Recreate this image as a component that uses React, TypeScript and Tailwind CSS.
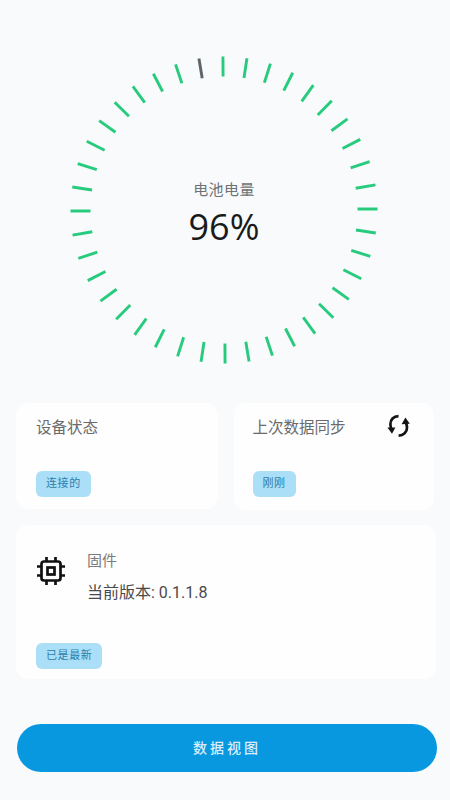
const CJK = "font-['Roboto','Noto_Sans_CJK_SC',sans-serif]";

function Gauge() {
  const ticks = Array.from({ length: 40 }, (_, i) => i);
  return (
    <svg width="320" height="320" viewBox="-160 -160 320 320" className="absolute left-0 top-0">
      {ticks.map((i) => (
        <line
          key={i}
          x1="0"
          y1="-153.5"
          x2="0"
          y2="-133.5"
          stroke={i === 39 ? "#5f6468" : "#28cb7d"}
          strokeWidth="2.9"
          transform={`rotate(${i * 9 - 0.4})`}
        />
      ))}
    </svg>
  );
}

function SyncIcon() {
  return (
    <svg width="26" height="26" viewBox="0 0 26 26" fill="none" stroke="#141414" strokeWidth="2.7">
      <path d="M12.5 3.2C7.5 3.2 4.4 6.8 4.4 11c0 2.2.4 3.8 1.2 5.4" />
      <path d="M1.4 14.6l4.6 6.2 3.4-6.4" fill="#141414" stroke="none" />
      <path d="M12.6 22.6c5 0 8.4-3.4 8.4-7.8 0-2.2-.4-3.6-1.2-5.4" />
      <path d="M15.6 11.2l3.8-6.6 4.4 6.2" fill="#141414" stroke="none" />
    </svg>
  );
}

function ChipIcon() {
  return (
    <svg width="32" height="32" viewBox="0 0 32 32" fill="none" stroke="#111" strokeWidth="2.7">
      <rect x="6.5" y="6.5" width="19" height="19" rx="2.5" />
      <rect x="12.5" y="12.5" width="7" height="7" />
      <path d="M11.5 2v4M20.5 2v4M11.5 26v4M20.5 26v4M2 11.5h4M2 20.5h4M26 11.5h4M26 20.5h4" />
    </svg>
  );
}

function Badge({ children }: { children: React.ReactNode }) {
  return (
    <span className="inline-flex h-[26px] items-center rounded-[6px] bg-[#aadff7] px-[10px] text-[11px] tracking-[0.6px] text-[#2c7dab]">
      {children}
    </span>
  );
}

export default function App() {
  return (
    <div className={`flex h-[800px] w-[450px] flex-col overflow-hidden bg-[#f8fafc] px-4 ${CJK}`}>
      <div className="relative mx-auto mt-[50px] flex h-[320px] w-[320px] translate-x-[-1px] flex-col items-center justify-center pt-[9px]">
        <Gauge />
        <span className="text-[15px] leading-5 tracking-[0.4px] text-[#6f7376]">电池电量</span>
        <span className="mt-[4px] font-['Open_Sans',sans-serif] text-[36px] leading-[46px] text-[#1a1a1a]">96%</span>
      </div>

      <div className="mt-[33px] flex gap-4">
        <div className="flex h-[106px] w-[202px] flex-col items-start justify-between rounded-xl bg-[#fefefe] px-5 pb-3 pt-[13px]">
          <span className="mt-[1px] text-[15.5px] leading-[22px] text-[#6b6b6b]">设备状态</span>
          <Badge>连接的</Badge>
        </div>
        <div className="flex h-[107px] w-[201px] flex-col items-start justify-between rounded-xl bg-[#fefefe] pb-[13px] pl-[19px] pr-[22px] pt-[10px]">
          <div className="flex w-full items-center justify-between">
            <span className="mt-[4px] text-[15.5px] leading-[22px] text-[#6b6b6b]">上次数据同步</span>
            <SyncIcon />
          </div>
          <Badge>刚刚</Badge>
        </div>
      </div>

      <div className="mt-[15px] flex h-[154px] w-[420px] flex-col items-start justify-between rounded-xl bg-[#fefefe] pb-[10px] pl-5 pt-[26px]">
        <div className="flex items-start gap-[19px]">
          <div className="mt-[4px] translate-x-[-1px]">
            <ChipIcon />
          </div>
          <div className="flex flex-col gap-[12px]">
            <span className="text-[15px] leading-[20px] text-[#7b7b7b]">固件</span>
            <span className="text-[16px] leading-[20px] text-[#4a4a4a]">当前版本: 0.1.1.8</span>
          </div>
        </div>
        <Badge>已是最新</Badge>
      </div>

      <button className="ml-[1px] mt-[45px] flex h-[48px] w-[420px] items-center justify-center rounded-[24px] bg-[#0898e0] text-[14px] font-medium tracking-[3px] text-[#d9eefa]">
        数据视图
      </button>
    </div>
  );
}
